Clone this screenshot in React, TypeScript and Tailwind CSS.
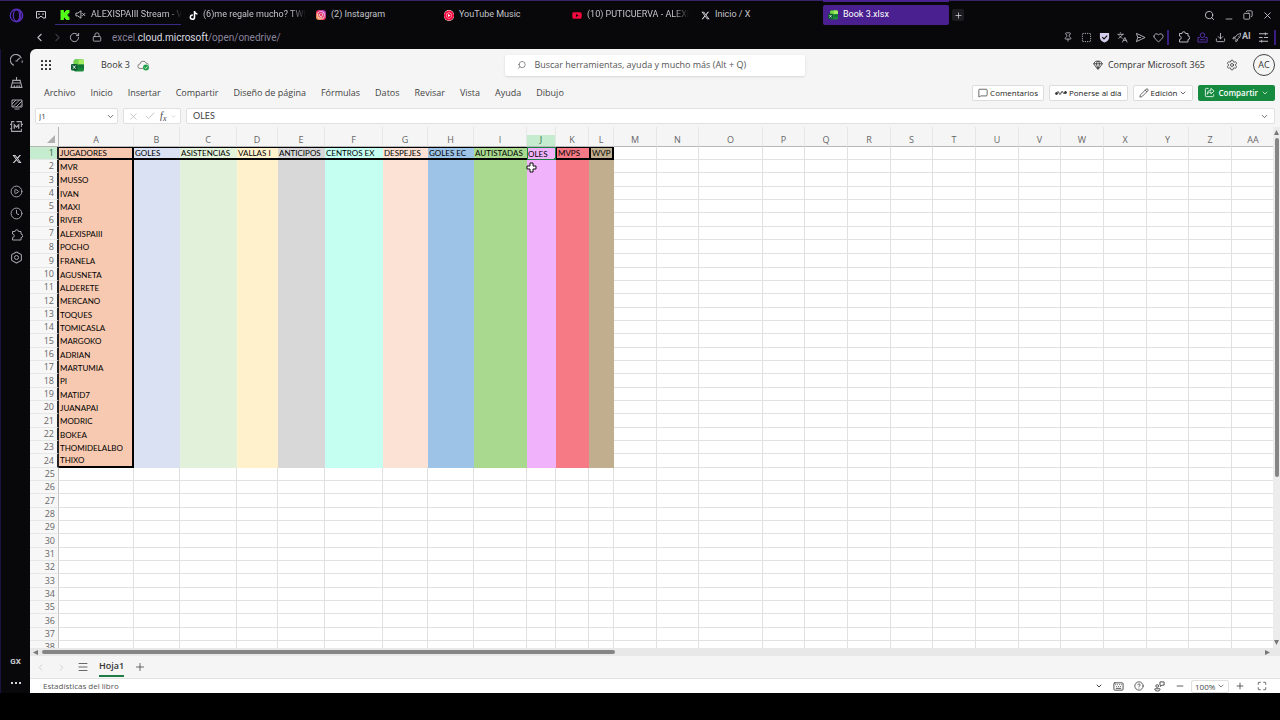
import { useState } from 'react'
import type { ReactNode } from 'react'
import {
  ChevronDown, ChevronLeft, ChevronRight, CircleHelp, CirclePlay, Clock, Copy, Download, Gem, Heart, Keyboard,
  Languages, Lock, Maximize, Menu, MessageSquare, Minus, Pencil, Pin, Plus, RotateCw, Search,
  Settings, SquareDashed, X, Check, Hexagon,
} from 'lucide-react'
import { SiKick, SiYoutubemusic } from 'react-icons/si'
import { FaTiktok, FaInstagram, FaXTwitter, FaYoutube } from 'react-icons/fa6'

const UI = 'font-["Open_Sans","Noto_Sans",sans-serif]'

// ==============================
// Data
// ==============================
const COLUMNS = [
  { id: 'A', w: 75, title: 'JUGADORES', fill: 'bg-[#f7c9b0]' },
  { id: 'B', w: 46, title: 'GOLES', fill: 'bg-[#d9e1f2]' },
  { id: 'C', w: 57, title: 'ASISTENCIAS', fill: 'bg-[#e2f1da]' },
  { id: 'D', w: 41, title: 'VALLAS I', fill: 'bg-[#fff1cc]' },
  { id: 'E', w: 47, title: 'ANTICIPOS', fill: 'bg-[#d8d8d8]' },
  { id: 'F', w: 58, title: 'CENTROS EX', fill: 'bg-[#c5fff2]' },
  { id: 'G', w: 45, title: 'DESPEJES', fill: 'bg-[#fbe2d5]' },
  { id: 'H', w: 46, title: 'GOLES EC', fill: 'bg-[#9dc3e6]' },
  { id: 'I', w: 53, title: 'AUTISTADAS', fill: 'bg-[#a9d98f]' },
  { id: 'J', w: 29, title: 'OLES', fill: 'bg-[#f0b3fb]' },
  { id: 'K', w: 33, title: 'MVPS', fill: 'bg-[#f57a86]' },
  { id: 'L', w: 25, title: 'WVP', fill: 'bg-[#c1ae8e]' },
  { id: 'M', w: 43 }, { id: 'N', w: 42 }, { id: 'O', w: 64 }, { id: 'P', w: 42 }, { id: 'Q', w: 43 },
  { id: 'R', w: 43 }, { id: 'S', w: 42 }, { id: 'T', w: 43 }, { id: 'U', w: 43 }, { id: 'V', w: 42 },
  { id: 'W', w: 43 }, { id: 'X', w: 43 }, { id: 'Y', w: 42 }, { id: 'Z', w: 43 }, { id: 'AA', w: 43 },
]

const PLAYERS = [
  'MVR', 'MUSSO', 'IVAN', 'MAXI', 'RIVER', 'ALEXISPAIII', 'POCHO', 'FRANELA', 'AGUSNETA', 'ALDERETE', 'MERCANO',
  'TOQUES', 'TOMICASLA', 'MARGOKO', 'ADRIAN', 'MARTUMIA', 'PI', 'MATID7', 'JUANAPAI', 'MODRIC', 'BOKEA',
  'THOMIDELALBO', 'THIXO',
]

const ROWS = Array.from({ length: 38 }, (_, i) => i + 1)

const MENU = [
  'Archivo', 'Inicio', 'Insertar', 'Compartir', 'Diseño de página', 'Fórmulas', 'Datos', 'Revisar', 'Vista',
  'Ayuda', 'Dibujo',
]

const TABS = [
  { title: 'ALEXISPAIII Stream - V', icon: <SiKick size={10} className="text-[#53fc18]" />, muted: true, fade: true },
  { title: '(6)me regale mucho? TWI', icon: <FaTiktok size={9} className="text-white" />, fade: true },
  {
    title: '(2) Instagram',
    icon: (
      <span className="flex h-[10px] w-[10px] items-center justify-center rounded-[3px] bg-linear-to-tr from-[#fdb13c] via-[#e8245f] to-[#a12bd8]">
        <FaInstagram size={8} className="text-white" />
      </span>
    ),
  },
  {
    title: 'YouTube Music',
    icon: <SiYoutubemusic size={11} className="rounded-full bg-white text-[#f0093c]" />,
  },
  { title: '(10) PUTICUERVA - ALEXI', icon: <FaYoutube size={11} className="text-[#f0093c]" />, fade: true },
  { title: 'Inicio / X', icon: <FaXTwitter size={9} className="text-gray-200" /> },
  { title: 'Book 3.xlsx', icon: <ExcelIcon size={10} />, active: true },
]

// ==============================
// Icons
// ==============================
function ExcelIcon({ size }: { size: number }) {
  return (
    <svg width={size} height={size} viewBox="0 0 24 24">
      <rect x="5" y="1" width="19" height="22" rx="3" fill="#1c8a3c" />
      <path d="M8 1h13a3 3 0 0 1 3 3v6H5V4a3 3 0 0 1 3-3z" fill="#6fd548" />
      <path d="M14 1h7a3 3 0 0 1 3 3v6H14z" fill="#a5ec62" />
      <path d="M14 10h10v7H14z" fill="#0f7435" />
      <rect x="0" y="9" width="12" height="12" rx="2" fill="#0b5c2e" />
      <path d="M3.500 12l5 6M8.500 12l-5 6" stroke="#fff" strokeWidth="1.600" />
    </svg>
  )
}

function OperaIcon() {
  return (
    <svg width="15" height="15" viewBox="0 0 24 24" fill="none" stroke="#5a2fc0" strokeWidth="2">
      <circle cx="12" cy="12" r="10" />
      <ellipse cx="12" cy="12" rx="5" ry="9" />
      <path d="M15 3c5 2 6 14 0 18" />
    </svg>
  )
}

function VrIcon() {
  return (
    <svg width="12" height="12" viewBox="0 0 24 24" fill="none" stroke="#c9c9cf" strokeWidth="2">
      <path d="M3 5h18v13h-5l-2-3h-4l-2 3H3z" />
      <path d="M6.500 10h3M14.500 10h3" strokeWidth="2.500" />
    </svg>
  )
}

function MutedIcon() {
  return (
    <svg width="11" height="11" viewBox="0 0 24 24" fill="none" stroke="#c9c9cf" strokeWidth="2">
      <path d="M2 9h4l7-5v16l-7-5H2zM16 9l6 6M22 9l-6 6" />
    </svg>
  )
}

function GaugeIcon() {
  return (
    <svg width="13" height="13" viewBox="0 0 24 24" fill="none" stroke="currentColor" strokeWidth="2">
      <path d="M7 21A10.500 10.500 0 1 1 21 8M22.500 12v4" />
      <path d="M12 13l6-6M10 13h4" />
    </svg>
  )
}

function CleanerIcon() {
  return (
    <svg width="13" height="13" viewBox="0 0 24 24" fill="none" stroke="currentColor" strokeWidth="2">
      <path d="M12 2v6M5 13V8h14v5M4 13h16l2 8H2zM8 17v4M13 17v4M17 17v4" />
    </svg>
  )
}

function WallpaperIcon() {
  return (
    <svg width="12" height="12" viewBox="0 0 24 24" fill="none" stroke="currentColor" strokeWidth="2">
      <path d="M2 4h20v14H2zM7 22h10M2 12l8-8M3 18L17 4M10 18L22 6M17 18l5-5" />
    </svg>
  )
}

function ModsIcon() {
  return (
    <svg width="13" height="13" viewBox="0 0 24 24" fill="none" stroke="currentColor" strokeWidth="2">
      <path d="M8 3H3v18h18v-5M12 3h9v10M0 8h3M0 16h3M21 8h3" />
      <path d="M8 16V9l4 4 4-4v7" strokeWidth="2.500" />
    </svg>
  )
}

function PuzzleIcon() {
  return (
    <svg width="12" height="12" viewBox="0 0 24 24" fill="none" stroke="currentColor" strokeWidth="2" strokeLinejoin="round">
      <path d="M3 5h5a3.500 3.500 0 0 1 7 0h5v5a3.500 3.500 0 0 1 0 7v5H3v-5a3.500 3.500 0 0 0 0-7z" />
    </svg>
  )
}

function SendIcon() {
  return (
    <svg width="11" height="11" viewBox="0 0 24 24" fill="none" stroke="currentColor" strokeWidth="2" strokeLinejoin="round">
      <path d="M3 3l19 9-19 9 3-9zM6 12h7" />
    </svg>
  )
}

function SlidersIcon() {
  return (
    <svg width="11" height="11" viewBox="0 0 24 24" fill="none" stroke="currentColor" strokeWidth="2.200">
      <path d="M2 4h20M2 12h8M13 12h9M2 20h20M16 1v6M8 17v6" />
    </svg>
  )
}

function WaffleIcon() {
  return (
    <svg width="12" height="12" viewBox="0 0 12 12" fill="#333">
      {[1, 5, 9].map(y => [1, 5, 9].map(x => <rect key={`${x}-${y}`} x={x} y={y} width="2" height="2" rx="0.500" />))}
    </svg>
  )
}

function SavedIcon() {
  return (
    <svg width="13" height="12" viewBox="0 0 26 24" fill="none">
      <path d="M12 19H6.500A4.500 4.500 0 0 1 6 10a6.500 6.500 0 0 1 12.500-1.500A5 5 0 0 1 23 11" stroke="#666" strokeWidth="1.600" />
      <circle cx="18" cy="17" r="6" fill="#22a04b" />
      <path d="M15.500 17l2 2 3.500-4" stroke="#fff" strokeWidth="1.600" />
    </svg>
  )
}

function PulseIcon() {
  return (
    <svg width="12" height="10" viewBox="0 0 24 20" fill="none" stroke="#333" strokeWidth="2">
      <path d="M3 11c2-5 4-5 5-1s3 4 4 0 3-4 4-1 3 2 4 1" />
      <circle cx="3" cy="11" r="2" fill="#333" />
      <circle cx="21" cy="9" r="2" fill="#333" />
    </svg>
  )
}

function ShareIcon() {
  return (
    <svg width="11" height="11" viewBox="0 0 24 24" fill="none" stroke="#fff" strokeWidth="1.800">
      <path d="M10 3H5a2 2 0 0 0-2 2v14a2 2 0 0 0 2 2h14a2 2 0 0 0 2-2v-3" />
      <path d="M15 3l7 6-7 6v-4c-4 0-6 1-8 5 0-6 3-9 8-9z" />
    </svg>
  )
}

function FeedbackIcon() {
  return (
    <svg width="11" height="11" viewBox="0 0 24 24" fill="none" stroke="currentColor" strokeWidth="2">
      <circle cx="7" cy="11" r="3" />
      <path d="M2 17h11v2c0 4-11 4-11 0zM13 2h9v7h-5l-3 3V9h-1z" />
    </svg>
  )
}

function PersonBoxIcon() {
  return (
    <svg width="11" height="11" viewBox="0 0 24 24" fill="none" stroke="#5c35b8" strokeWidth="2">
      <circle cx="12" cy="7" r="5" />
      <path d="M6 12H2v10h20V12h-4M6 17h12" />
    </svg>
  )
}

function ShieldIcon() {
  return (
    <svg width="11" height="11" viewBox="0 0 24 24" fill="none">
      <path d="M2 2h20v10c0 6-5 9-10 11C7 21 2 18 2 12z" fill="#d5cdec" />
      <path d="M7 11l4 4 7-7" stroke="#0a0a0b" strokeWidth="2.500" />
    </svg>
  )
}

function RocketIcon() {
  return (
    <svg width="10" height="11" viewBox="0 0 24 24" fill="none" stroke="currentColor" strokeWidth="2">
      <path d="M21 2l-2 9-8 7-5-5 7-8zM8 11H4l-2 4h4M13 16v4l-4 2v-4M14 8l2 2" />
    </svg>
  )
}

function CellCursor() {
  return (
    <svg className="absolute top-[2px] -left-px" width="11" height="11" viewBox="0 0 11 11">
      <path d="M4 1h3v3h3v3H7v3H4V7H1V4h3z" fill="#fff" stroke="#111" />
    </svg>
  )
}

// ==============================
// Browser chrome
// ==============================
function TabStrip() {
  return (
    <div className="flex h-6 items-end">
      <div className="flex h-5 w-[55px] shrink-0 items-center gap-[11px] pl-[9px]">
        <OperaIcon />
        <VrIcon />
      </div>
      <nav className="flex min-w-0 gap-[2px]">
        {TABS.map(t => (
          <a
            key={t.title}
            href="#"
            className={`relative flex h-5 w-[126px] min-w-0 items-center gap-[5px] px-[5px] text-[9px] ${
              t.active
                ? 'rounded-xs bg-[#4a1f8f] text-white before:absolute before:inset-x-0 before:-top-[5px] before:h-[2px] before:bg-[#4a1f8f]'
                : 'text-[#c4c4ca]'
            } ${t.muted ? 'border-b border-[#3a2a86]' : ''}`}
          >
            <span className="flex w-[10px] shrink-0 justify-center">{t.icon}</span>
            {t.muted && <span className="shrink-0"><MutedIcon /></span>}
            <span className={`whitespace-nowrap ${t.fade ? 'mask-r-from-85%' : ''}`}>{t.title}</span>
          </a>
        ))}
      </nav>
      <button aria-label="Nueva pestaña" className="ml-[3px] mb-[4px] flex h-3 w-3 items-center justify-center rounded-xs bg-[#1c1c20] text-gray-300">
        <Plus size={9} />
      </button>
      <div className="ml-auto flex h-5 items-center gap-[9px] pr-[7px] text-[#c4c4ca]">
        <button aria-label="Buscar"><Search size={11} /></button>
        <button aria-label="Minimizar" className="pt-[7px]"><Minus size={10} /></button>
        <button aria-label="Restaurar"><Copy size={10} className="-scale-x-100" /></button>
        <button aria-label="Cerrar"><X size={11} /></button>
      </div>
    </div>
  )
}

function ToolbarIcon({ label, children }: { label: string; children: ReactNode }) {
  return <button aria-label={label} className="flex w-[18px] justify-center">{children}</button>
}

function AddressBar() {
  return (
    <div className="flex h-6 items-center pl-[33px] pr-1 text-[#b9b9c0]">
      <button aria-label="Atrás" className="mr-[5px]"><ChevronLeft size={13} /></button>
      <button aria-label="Adelante" className="mr-[5px] text-[#3c3c42]"><ChevronRight size={13} /></button>
      <button aria-label="Recargar" className="mr-3"><RotateCw size={11} /></button>
      <Lock size={10} className="mr-[10px]" />
      <span className="text-[10px] text-[#8a839c]">
        excel.<span className="text-[#dcdce2]">cloud.microsoft</span>/open/onedrive/
      </span>
      <div className="ml-auto flex items-center">
        <ToolbarIcon label="Fijar"><Pin size={10} /></ToolbarIcon>
        <ToolbarIcon label="Captura"><SquareDashed size={11} /></ToolbarIcon>
        <ToolbarIcon label="Bloqueador"><ShieldIcon /></ToolbarIcon>
        <ToolbarIcon label="Traducir"><Languages size={11} /></ToolbarIcon>
        <ToolbarIcon label="Enviar"><SendIcon /></ToolbarIcon>
        <ToolbarIcon label="Favoritos"><Heart size={11} /></ToolbarIcon>
        <span className="h-[15px] w-[2px] bg-[#3b1f80]" />
        <span className="w-[6px]" />
        <ToolbarIcon label="Extensiones"><PuzzleIcon /></ToolbarIcon>
        <ToolbarIcon label="Perfil"><PersonBoxIcon /></ToolbarIcon>
        <ToolbarIcon label="Descargas"><Download size={11} /></ToolbarIcon>
        <button className="ml-[3px] flex w-5 items-center text-[9px] font-bold"><RocketIcon />AI</button>
        <span className="w-[2px]" />
        <ToolbarIcon label="Menú"><SlidersIcon /></ToolbarIcon>
        <span className="ml-[2px] h-[15px] w-[2px] bg-[#3b1f80]" />
      </div>
    </div>
  )
}

function SideItem({ label, children }: { label: string; children: ReactNode }) {
  return <button aria-label={label} className="flex h-[22px] w-full items-center justify-center pl-[2px]">{children}</button>
}

function Sidebar() {
  return (
    <aside className="flex w-[30px] shrink-0 flex-col border-l border-[#1d1340] text-[#a5a5ab]">
      <SideItem label="GX Control"><GaugeIcon /></SideItem>
      <SideItem label="GX Cleaner"><CleanerIcon /></SideItem>
      <SideItem label="Fondos"><WallpaperIcon /></SideItem>
      <SideItem label="Mods"><ModsIcon /></SideItem>
      <div className="mt-[11px]"><SideItem label="X"><FaXTwitter size={10} className="text-gray-200" /></SideItem></div>
      <div className="mt-[10px]">
        <SideItem label="Player"><CirclePlay size={13} strokeWidth={1.8} /></SideItem>
        <SideItem label="Historial"><Clock size={13} strokeWidth={1.8} /></SideItem>
        <SideItem label="Extensiones"><PuzzleIcon /></SideItem>
        <SideItem label="Configuración">
          <span className="grid place-items-center *:col-start-1 *:row-start-1">
            <Hexagon size={13} />
            <span className="h-[5px] w-[5px] rounded-full border border-[#a5a5ab]" />
          </span>
        </SideItem>
      </div>
      <div className="mt-auto text-[8px] font-bold text-gray-300">
        <button className="flex h-[22px] w-full items-center justify-center">GX</button>
        <button aria-label="Más" className="flex h-5 w-full items-center justify-center gap-[2px]">
          <i className="h-[2px] w-[2px] bg-gray-300" />
          <i className="h-[2px] w-[2px] bg-gray-300" />
          <i className="h-[2px] w-[2px] bg-gray-300" />
        </button>
      </div>
    </aside>
  )
}

// ==============================
// Excel header
// ==============================
function TitleBar() {
  return (
    <header className="grid h-8 grid-cols-[1fr_300px_1fr] items-center px-[5px] text-[9px] text-[#333]">
      <div className="flex items-center pl-[5px]">
        <button aria-label="Aplicaciones" className="mr-[19px]"><WaffleIcon /></button>
        <ExcelIcon size={13} />
        <span className="ml-[17px] mr-[7px]">Book 3</span>
        <SavedIcon />
      </div>
      <label className="flex h-[21px] items-center gap-2 rounded-xs bg-white pl-3 shadow-sm">
        <Search size={10} strokeWidth={1.6} className="-scale-x-100 text-[#555]" />
        <input
          aria-label="Buscar"
          placeholder="Buscar herramientas, ayuda y mucho más (Alt + Q)"
          className="w-full bg-transparent text-[9px] outline-none placeholder:text-[#555]"
        />
      </label>
      <div className="flex items-center justify-end">
        <button className="flex items-center gap-[5px] whitespace-nowrap">
          <Gem size={10} />
          Comprar Microsoft 365
        </button>
        <button aria-label="Configuración" className="ml-[21px]"><Settings size={12} strokeWidth={1.6} /></button>
        <button className="ml-[15px] flex h-[22px] w-[22px] items-center justify-center rounded-full border border-[#444]">AC</button>
      </div>
    </header>
  )
}

function RibbonTabs() {
  const btn = 'flex h-4 items-center gap-[2px] whitespace-nowrap rounded-xs border border-[#dcdcdc] bg-white px-[5px] text-[8px] text-[#222]'
  return (
    <div className="flex h-[23px] items-center justify-between pl-[14px] pr-[5px] text-[9px] text-[#444]">
      <nav className="flex gap-[15px]">
        {MENU.map(m => <button key={m} className="whitespace-nowrap">{m}</button>)}
      </nav>
      <div className="flex gap-[5px]">
        <button className={btn}><MessageSquare size={10} strokeWidth={1.6} />Comentarios</button>
        <button className={btn}><PulseIcon />Ponerse al día</button>
        <button className={btn}><Pencil size={10} strokeWidth={1.6} />Edición<ChevronDown size={8} /></button>
        <button className="flex h-4 items-center gap-[3px] rounded-xs bg-[#168a3e] px-[6px] text-[8px] font-semibold text-white">
          <ShareIcon />Compartir<ChevronDown size={8} />
        </button>
      </div>
    </div>
  )
}

function FormulaBar({ value, onChange }: { value: string; onChange: (v: string) => void }) {
  const box = 'flex h-4 items-center rounded-xs border border-[#e0e0e0] bg-white'
  return (
    <div className="flex h-[23px] items-start gap-[5px] px-[5px] pt-[4px] text-[#444]">
      <div className={`${box} w-[83px] shrink-0 justify-between px-[2px]`}>
        <input aria-label="Cuadro de nombres" defaultValue="J1" className="w-14 pl-px text-[8px] outline-none" />
        <ChevronDown size={9} />
      </div>
      <div className={`${box} w-[58px] shrink-0 justify-between px-[4px]`}>
        <X size={11} strokeWidth={1.5} className="text-[#b5b5b5]" />
        <Check size={12} strokeWidth={1.5} className="text-[#b5b5b5]" />
        <span className="font-['Liberation_Serif',serif] text-[10px] leading-[12px] italic">f<sub className="text-[8px]">x</sub></span>
        <ChevronDown size={5} className="text-[#999]" />
      </div>
      <div className={`${box} min-w-0 flex-1 pl-[6px] pr-[5px]`}>
        <input
          aria-label="Barra de fórmulas"
          value={value}
          onChange={e => onChange(e.target.value)}
          className="min-w-0 flex-1 font-[Lato,sans-serif] text-[9px] outline-none"
        />
        <ChevronDown size={9} />
      </div>
    </div>
  )
}

// ==============================
// Sheet
// ==============================
function cellClass(col: string, row: number, filled: boolean) {
  const base = 'relative whitespace-nowrap overflow-visible p-0'
  if (!filled) return `${base} border-r border-b border-[#e1e1e1]`
  if (col === 'A') {
    if (row === 1) return `${base} border-t border-b-2 border-r-2 border-black`
    return `${base} border-r-2 border-black ${row === 24 ? 'border-b-2' : ''}`
  }
  if (row > 1) return base
  if (col === 'J') return `${base} outline -outline-offset-1 outline-[#1a7f43]`
  if (col === 'K') return `${base} border-l border-t border-b-2 border-black`
  if (col === 'L') return `${base} border-x-2 border-t border-b-2 border-black`
  return `${base} border-t border-b-2 border-black`
}

function Sheet({ selected }: { selected: string }) {
  return (
    <div className="min-w-0 flex-1 overflow-hidden bg-white">
      <table className="w-full table-fixed border-separate border-spacing-0">
        <colgroup>
          <col style={{ width: 29 }} />
          {COLUMNS.map(c => <col key={c.id} style={{ width: c.w }} />)}
        </colgroup>
        <thead>
          <tr className="h-5 bg-[#f5f5f5] text-[9px] leading-[12px] text-[#666]">
            <th aria-label="Seleccionar todo" className="border-r border-b border-[#b5b5b5] p-0 align-bottom">
              <svg className="mb-[3px] ml-auto mr-[3px]" width="8" height="8" viewBox="0 0 8 8"><path d="M8 0v8H0z" fill="#b0b0b0" /></svg>
            </th>
            {COLUMNS.map(c => (
              <th
                key={c.id}
                className={`border-r border-b border-r-[#e6e6e6] border-b-[#b9b9b9] p-0 align-bottom font-normal ${c.id === 'J' ? 'bg-linear-to-t from-[#c6ecd0] from-60% to-[#f5f5f5] to-60% text-[#2b6b45]' : ''}`}
              >
                {c.id}
              </th>
            ))}
          </tr>
        </thead>
        <tbody className="font-[Lato,sans-serif] text-[8px] leading-[10px] text-black">
          {ROWS.map(r => (
            <tr key={r} className={r % 3 === 0 || r === 8 ? 'h-[14px]' : 'h-[13px]'}>
              <th
                className={`border-b border-b-[#e6e6e6] p-0 pr-[3px] text-right font-["Open_Sans",sans-serif] text-[9px] font-normal ${
                  r === 1 ? 'bg-[#c6ecd0] text-[#2b6b45]' : 'bg-[#f7f7f7] text-[#666]'
                } ${r <= 24 ? 'border-r-2 border-r-[#222]' : 'border-r border-r-[#c5c5c5]'}`}
              >
                {r}
              </th>
              {COLUMNS.map(c => {
                const filled = !!c.fill && r <= 24
                const text = r === 1 ? (c.id === 'J' ? selected : c.title) : c.id === 'A' ? PLAYERS[r - 2] : ''
                return (
                  <td key={c.id} className={`${cellClass(c.id, r, filled)} ${filled ? c.fill : ''}`}>
                    {text && <span className="pl-px">{text}</span>}
                    {c.id === 'J' && r === 1 && <i className="absolute -right-px -bottom-px h-[3px] w-[3px] bg-[#1a7f43]" />}
                    {c.id === 'J' && r === 2 && <CellCursor />}
                  </td>
                )
              })}
            </tr>
          ))}
        </tbody>
      </table>
    </div>
  )
}

function VerticalScroll() {
  return (
    <div className="flex w-[7px] shrink-0 flex-col items-center bg-[#ececec] py-[3px]">
      <svg width="5" height="5" viewBox="0 0 5 5" className="shrink-0"><path d="M2.500 0L5 5H0z" fill="#777" /></svg>
      <div className="my-[3px] min-h-0 w-full flex-1">
        <div className="mx-auto h-[68%] w-[4px] rounded-full bg-[#858585]" />
      </div>
      <svg width="5" height="5" viewBox="0 0 5 5" className="shrink-0"><path d="M0 0h5L2.500 5z" fill="#777" /></svg>
    </div>
  )
}

function HorizontalScroll() {
  return (
    <div className="flex h-[8px] shrink-0 items-center bg-[#e8e8e8] pl-[3px] pr-[10px]">
      <svg width="5" height="5" viewBox="0 0 5 5"><path d="M5 0v5L0 2.500z" fill="#777" /></svg>
      <div className="mx-1 flex-1">
        <div className="h-[4px] w-[47%] rounded-full bg-[#858585]" />
      </div>
      <svg width="5" height="5" viewBox="0 0 5 5"><path d="M0 0l5 2.500L0 5z" fill="#777" /></svg>
    </div>
  )
}

function SheetTabs() {
  return (
    <div className="flex h-[22px] shrink-0 items-center pl-[5px] text-[#444]">
      <button aria-label="Hoja anterior" className="text-[#c0c0c0]"><ChevronLeft size={11} strokeWidth={1.5} /></button>
      <button aria-label="Hoja siguiente" className="ml-[10px] text-[#c0c0c0]"><ChevronRight size={11} strokeWidth={1.5} /></button>
      <button aria-label="Todas las hojas" className="ml-[10px]"><Menu size={12} strokeWidth={1.6} /></button>
      <button className="ml-[10px] h-5 border-b-2 border-[#1e7b45] text-[9px] font-semibold text-[#333]">Hoja1</button>
      <button aria-label="Agregar hoja" className="ml-[10px]"><Plus size={12} strokeWidth={1.6} /></button>
    </div>
  )
}

function StatusBar() {
  return (
    <footer className="flex h-[15px] shrink-0 items-center justify-between border-t border-[#e2e2e2] bg-white pl-[13px] pr-[13px] text-[8px] text-[#555]">
      <span>Estadísticas del libro</span>
      <div className="flex items-center gap-[10px] text-[#444]">
        <ChevronDown size={8} strokeWidth={3} />
        <Keyboard size={11} />
        <CircleHelp size={10} />
        <FeedbackIcon />
        <button aria-label="Alejar"><Minus size={10} /></button>
        <div className="-mx-1 flex items-center rounded-xs border border-[#e0e0e0] px-[3px]">
          <select aria-label="Zoom" defaultValue="100%" className="w-[22px] appearance-none text-[8px] leading-[11px] outline-none">
            <option>100%</option>
            <option>150%</option>
          </select>
          <ChevronDown size={8} />
        </div>
        <button aria-label="Acercar"><Plus size={10} /></button>
        <button aria-label="Pantalla completa" className="ml-[2px]"><Maximize size={10} /></button>
      </div>
    </footer>
  )
}

export default function App() {
  const [value, setValue] = useState('OLES')

  return (
    <div className="flex h-screen flex-col overflow-hidden bg-black pb-[27px] font-[Roboto,sans-serif]">
      <div className="flex min-h-0 flex-1 flex-col bg-[#08080a]">
        <div className="border-t border-[#3a2266]"><TabStrip /></div>
        <AddressBar />
        <div className="flex min-h-0 flex-1">
          <Sidebar />
          <main className={`flex min-w-0 flex-1 flex-col overflow-hidden rounded-tl-md bg-[#f5f5f5] ${UI}`}>
            <TitleBar />
            <RibbonTabs />
            <FormulaBar value={value} onChange={setValue} />
            <div className="flex min-h-0 flex-1">
              <Sheet selected={value} />
              <VerticalScroll />
            </div>
            <HorizontalScroll />
            <SheetTabs />
            <StatusBar />
          </main>
        </div>
      </div>
    </div>
  )
}
